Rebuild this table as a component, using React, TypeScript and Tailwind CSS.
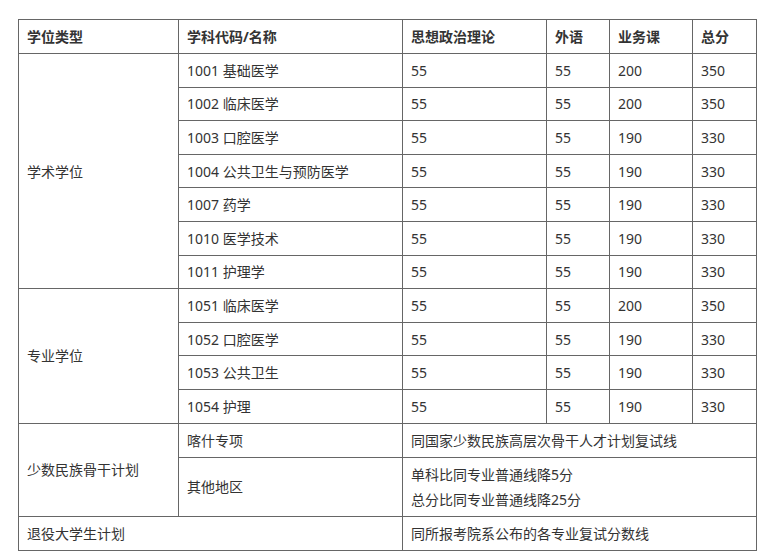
const rows = [
  { code: '1001 基础医学', a: '55', b: '55', c: '200', d: '350' },
  { code: '1002 临床医学', a: '55', b: '55', c: '200', d: '350' },
  { code: '1003 口腔医学', a: '55', b: '55', c: '190', d: '330' },
  { code: '1004 公共卫生与预防医学', a: '55', b: '55', c: '190', d: '330' },
  { code: '1007 药学', a: '55', b: '55', c: '190', d: '330' },
  { code: '1010 医学技术', a: '55', b: '55', c: '190', d: '330' },
  { code: '1011 护理学', a: '55', b: '55', c: '190', d: '330' },
];

const proRows = [
  { code: '1051 临床医学', a: '55', b: '55', c: '200', d: '350' },
  { code: '1052 口腔医学', a: '55', b: '55', c: '190', d: '330' },
  { code: '1053 公共卫生', a: '55', b: '55', c: '190', d: '330' },
  { code: '1054 护理', a: '55', b: '55', c: '190', d: '330' },
];

const td = 'border border-[#666] pl-2 align-middle';

const ScoreRow = ({ r, first, label, span }: { r: typeof rows[0]; first?: boolean; label?: string; span?: number }) => (
  <tr className="h-[33.6px]">
    {first && (
      <td rowSpan={span} className={td}>
        {label}
      </td>
    )}
    <td className={td}>{r.code}</td>
    <td className={td}>{r.a}</td>
    <td className={td}>{r.b}</td>
    <td className={td}>{r.c}</td>
    <td className={td}>{r.d}</td>
  </tr>
);

export default function App() {
  return (
    <div className="min-h-screen bg-white pt-[19px] pl-[18px] text-[#333] text-[14px] font-['Noto_Sans','Noto_Sans_CJK_SC',sans-serif]">
      <table className="table-fixed border-collapse w-[738px]">
        <colgroup>
          <col className="w-[160px]" />
          <col className="w-[224px]" />
          <col className="w-[144px]" />
          <col className="w-[63px]" />
          <col className="w-[83px]" />
          <col className="w-[64px]" />
        </colgroup>
        <thead>
          <tr className="h-[34px] font-bold text-left">
            <th className={td}>学位类型</th>
            <th className={td}>学科代码/名称</th>
            <th className={td}>思想政治理论</th>
            <th className={td}>外语</th>
            <th className={td}>业务课</th>
            <th className={td}>总分</th>
          </tr>
        </thead>
        <tbody>
          {rows.map((r, i) => (
            <ScoreRow key={r.code} r={r} first={i === 0} label="学术学位" span={rows.length} />
          ))}
          {proRows.map((r, i) => (
            <ScoreRow key={r.code} r={r} first={i === 0} label="专业学位" span={proRows.length} />
          ))}
          <tr className="h-[34px]">
            <td rowSpan={2} className={td}>少数民族骨干计划</td>
            <td className={td}>喀什专项</td>
            <td colSpan={4} className={td}>同国家少数民族高层次骨干人才计划复试线</td>
          </tr>
          <tr className="h-[59px]">
            <td className={td}>其他地区</td>
            <td colSpan={4} className={td}>
              <p className="leading-[25px]">单科比同专业普通线降5分</p>
              <p className="leading-[25px]">总分比同专业普通线降25分</p>
            </td>
          </tr>
          <tr className="h-[34px]">
            <td colSpan={2} className={td}>退役大学生计划</td>
            <td colSpan={4} className={td}>同所报考院系公布的各专业复试分数线</td>
          </tr>
        </tbody>
      </table>
    </div>
  );
}
